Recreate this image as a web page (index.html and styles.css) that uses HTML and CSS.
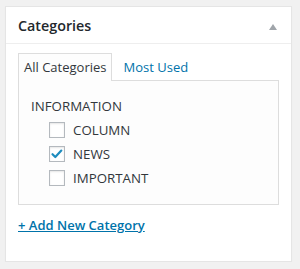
FILE: index.html
```html
<!DOCTYPE html>
<html>
<head>
<meta charset="utf-8">
<link rel="stylesheet" href="styles.css">
</head>
<body>
<div class="postbox">
  <div class="hndle">
    <h2>Categories</h2>
    <span class="toggle"></span>
  </div>
  <div class="inside">
    <ul class="tabs">
      <li class="tab active">All Categories</li>
      <li class="tab"><a href="#">Most Used</a></li>
    </ul>
    <div class="panel">
      <ul class="cats">
        <li class="parent">INFORMATION
          <ul class="children">
            <li><span class="cb"></span>COLUMN</li>
            <li><span class="cb checked"><svg viewBox="0 0 16 16" width="16" height="16"><path d="M3.5 8.2 L6.3 11 L12.3 4.6" fill="none" stroke="#1e8cbe" stroke-width="2.2" stroke-linecap="round" stroke-linejoin="round"/></svg></span>NEWS</li>
            <li><span class="cb"></span>IMPORTANT</li>
          </ul>
        </li>
      </ul>
    </div>
    <a class="add" href="#">+ Add New Category</a>
  </div>
</div>
</body>
</html>
```
FILE: styles.css
```css
html, body {
  margin: 0;
  padding: 0;
}
body {
  background: #f1f1f1;
  font-family: "Open Sans", "Liberation Sans", sans-serif;
  color: #444;
  padding: 6px 0 0 5px;
}
.postbox {
  width: 287px;
  box-sizing: border-box;
  background: #fff;
  border: 1px solid #e5e5e5;
  box-shadow: 0 1px 1px rgba(0,0,0,0.04);
}
.hndle {
  display: flex;
  align-items: center;
  justify-content: space-between;
  height: 36px;
  padding: 0 14px 0 12px;
  border-bottom: 1px solid #eee;
}
.hndle h2 {
  margin: 0;
  font-size: 14.3px;
  font-weight: 600;
  color: #23282d;
}
.toggle {
  width: 0;
  height: 0;
  border-left: 4px solid transparent;
  border-right: 4px solid transparent;
  border-bottom: 6px solid #a0a5aa;
  margin-top: 4px;
}
.inside {
  padding: 8px 12px 26px 12px;
}
.tabs {
  list-style: none;
  margin: 0;
  padding: 0;
  display: flex;
  font-size: 13px;
}
.tab {
  padding: 4px 5px 5px 5px;
  line-height: 18px;
  border: 1px solid transparent;
  border-bottom: none;
  position: relative;
  top: 1px;
}
.tab.active {
  border-color: #ddd;
  background: #fdfdfd;
  color: #32373c;
  padding-top: 4px;
}
.tab a {
  color: #0073aa;
  text-decoration: none;
  padding-left: 5px;
}
.panel {
  border: 1px solid #ddd;
  background: #fdfdfd;
  height: 123px;
  padding: 0 12px;
}
.cats {
  list-style: none;
  margin: 0;
  padding: 14px 0 0 0;
  font-size: 13.3px;
  color: #32373c;
}
.parent {
  line-height: 22px;
}
.children {
  list-style: none;
  margin: 1px 0 0 0;
  padding: 0 0 0 18px;
}
.children li {
  display: flex;
  align-items: center;
  height: 24px;
  line-height: 24px;
}
.cb {
  width: 16px;
  height: 16px;
  box-sizing: border-box;
  border: 1px solid #b4b9be;
  background: #fff;
  box-shadow: inset 0 1px 2px rgba(0,0,0,0.1);
  margin-right: 8px;
  display: inline-flex;
  align-items: center;
  justify-content: center;
}
.cb svg {
  margin: -1px;
}
.add {
  display: inline-block;
  margin-top: 11px;
  font-size: 13px;
  font-weight: 600;
  color: #0073aa;
  text-decoration: underline;
}
```
